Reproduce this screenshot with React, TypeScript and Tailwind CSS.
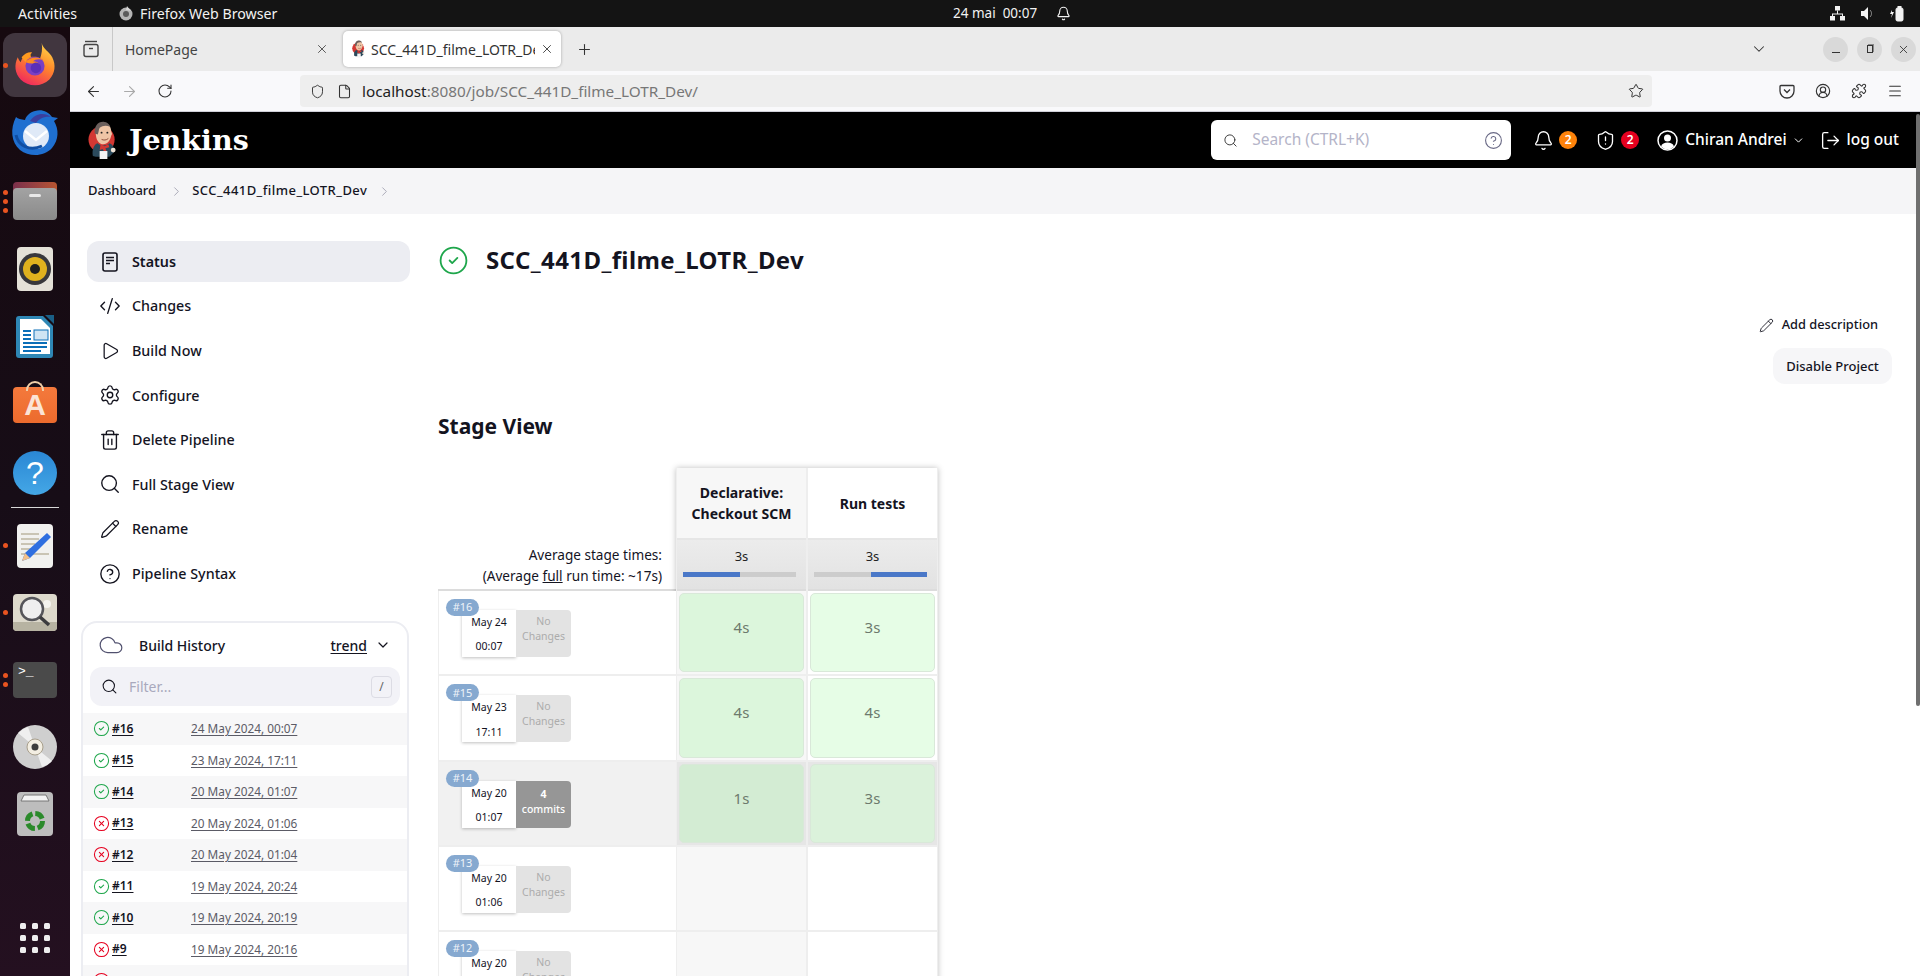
import {
  ArrowLeft,
  ArrowRight,
  Bell,
  ChevronDown,
  ChevronRight,
  CircleCheck,
  CircleHelp,
  CircleUserRound,
  CircleX,
  Cloud,
  CodeXml,
  File,
  LogOut,
  Menu,
  Pencil,
  Play,
  Plus,
  Puzzle,
  RotateCw,
  Search,
  Settings,
  Shield,
  ShieldAlert,
  Star,
  Trash2,
  X,
} from "lucide-react";
import type { ReactNode } from "react";

const navItems = [
  { label: "Status", icon: <StatusIcon />, active: true },
  { label: "Changes", icon: <CodeXml size={22} strokeWidth={1.5} /> },
  { label: "Build Now", icon: <Play size={20} strokeWidth={1.5} /> },
  { label: "Configure", icon: <Settings size={22} strokeWidth={1.5} /> },
  { label: "Delete Pipeline", icon: <Trash2 size={22} strokeWidth={1.5} /> },
  { label: "Full Stage View", icon: <Search size={22} strokeWidth={1.5} /> },
  { label: "Rename", icon: <Pencil size={20} strokeWidth={1.5} /> },
  { label: "Pipeline Syntax", icon: <CircleHelp size={22} strokeWidth={1.5} /> },
];

const builds = [
  { id: "#16", date: "24 May 2024, 00:07", ok: true },
  { id: "#15", date: "23 May 2024, 17:11", ok: true },
  { id: "#14", date: "20 May 2024, 01:07", ok: true },
  { id: "#13", date: "20 May 2024, 01:06", ok: false },
  { id: "#12", date: "20 May 2024, 01:04", ok: false },
  { id: "#11", date: "19 May 2024, 20:24", ok: true },
  { id: "#10", date: "19 May 2024, 20:19", ok: true },
  { id: "#9", date: "19 May 2024, 20:16", ok: false },
  { id: "#8", date: "19 May 2024, 20:10", ok: false },
];

const stageRows = [
  { id: "#16", day: "May 24", time: "00:07", commits: 0, a: "4s", b: "3s" },
  { id: "#15", day: "May 23", time: "17:11", commits: 0, a: "4s", b: "4s" },
  { id: "#14", day: "May 20", time: "01:07", commits: 4, a: "1s", b: "3s", hover: true },
  { id: "#13", day: "May 20", time: "01:06", commits: 0 },
  { id: "#12", day: "May 20", time: "01:04", commits: 0 },
];

function StatusIcon() {
  return (
    <svg width="22" height="22" viewBox="0 0 22 22" fill="none" stroke="currentColor" strokeWidth="1.6">
      <rect x="4" y="2" width="14" height="18" rx="2" />
      <path d="M7 6.500h8M7 9.500h8M7 12.500h4" />
    </svg>
  );
}

function UserIcon() {
  return (
    <svg width="21" height="21" viewBox="0 0 21 21">
      <circle cx="10.500" cy="10.500" r="9.500" fill="none" stroke="#fff" strokeWidth="1.500" />
      <circle cx="10.500" cy="8" r="3.500" fill="#fff" />
      <path d="M4 16.500c1-3 3.500-4 6.500-4s5.500 1 6.500 4a9 9 0 0 1-13 0z" fill="#fff" />
    </svg>
  );
}

function FirefoxLogo({ size = 46 }: { size?: number }) {
  return (
    <svg width={size} height={size} viewBox="0 0 48 48">
      <defs>
        <linearGradient id="ffA" x1="0.8" y1="0" x2="0.3" y2="1">
          <stop offset="0" stopColor="#ffd84a" />
          <stop offset="0.45" stopColor="#ff8a2a" />
          <stop offset="1" stopColor="#f0285e" />
        </linearGradient>
      </defs>
      <path d="M31 1c1 6 8 9 11 15 4 8 3 17-3 23-8 8-22 8-30 0C3 33 2 24 6 16c1 3 2 4 3 5 1-4 4-7 8-9-1 2-1 3 0 4 4-1 8-1 12 2 2-5 3-11 2-17z" fill="url(#ffA)" />
      <path d="M10 16c3-4 8-6 11-5-2 2-2 3-1 4-3 1-5 3-6 6-1-2-3-3-4-5z" fill="#ff9a1f" />
      <circle cx="24" cy="25" r="10" fill="#7a3fc4" />
      <path d="M14 21c4-5 13-7 19-2-5-2-9-1-11 1 3 0 5 1 6 3-5-1-9 0-14-2z" fill="#ff8a1f" />
      <circle cx="25" cy="27" r="5.500" fill="#5b2fb8" />
    </svg>
  );
}

function DockIcon({ name }: { name: string }) {
  if (name === "firefox") return <FirefoxLogo />;
  if (name === "thunderbird")
    return (
      <svg width="50" height="48" viewBox="0 0 50 48">
        <path d="M6 8c-6 12-5 25 4 33 9 7 24 7 32-2 7-8 7-19 2-27l4-3-6-1c-4-6-11-8-17-6-5 1-9 5-10 9-4-1-7-1-9-3z" fill="#1f6fd0" />
        <path d="M20 12c5-8 15-9 21-4-7-1-12 2-15 6z" fill="#3b3f9e" />
        <circle cx="26" cy="27" r="13" fill="#dfe9f7" />
        <path d="M15 22l11 9 11-9" fill="none" stroke="#fff" strokeWidth="2.500" />
        <path d="M6 26c2 10 13 17 26 11" fill="none" stroke="#0f4ea3" strokeWidth="3" />
      </svg>
    );
  if (name === "files")
    return (
      <div className="relative h-[38px] w-[44px]">
        <div className="absolute left-0 top-0 h-[20px] w-full rounded-t-[4px] bg-gradient-to-r from-[#7a2f4a] to-[#b8552f]" />
        <div className="absolute bottom-0 left-0 flex h-[32px] w-full justify-center rounded-[4px] bg-gradient-to-b from-[#a3a3a3] to-[#8a8a8a] pt-[6px]">
          <div className="h-[3px] w-[12px] rounded-sm bg-[#e8e8e8]" />
        </div>
      </div>
    );
  if (name === "rhythmbox")
    return (
      <div className="flex h-[44px] w-[36px] items-center justify-center rounded-[4px] bg-[#e4e1d8]">
        <div className="flex h-[32px] w-[32px] items-center justify-center rounded-full bg-[#38383c]">
          <div className="flex h-[24px] w-[24px] items-center justify-center rounded-full bg-[#dfb11e]">
            <div className="h-[10px] w-[10px] rounded-full bg-[#1e1e1e]" />
          </div>
        </div>
      </div>
    );
  if (name === "writer")
    return (
      <svg width="38" height="44" viewBox="0 0 38 44">
        <path d="M3 1h24l10 10v29a3 3 0 0 1-3 3H3a3 3 0 0 1-3-3V4a3 3 0 0 1 3-3z" fill="#2e87b5" />
        <path d="M4 4h21l9 9v26H4z" fill="#fff" />
        <path d="M29 0h9v9z" fill="#1a5f86" />
        <path d="M7 16h8M7 20h8M7 24h8M7 28h24M7 32h24M7 36h18" stroke="#0b6fb8" strokeWidth="2" />
        <rect x="18" y="15" width="14" height="10" fill="#cfe4f3" stroke="#0b6fb8" />
      </svg>
    );
  if (name === "software")
    return (
      <div className="relative flex h-[36px] w-[44px] items-center justify-center rounded-[4px] bg-gradient-to-b from-[#f4793c] to-[#ec6b2d]">
        <div className="absolute left-[13px] top-[-6px] h-[10px] w-[18px] rounded-t-full border-2 border-b-0 border-[#f0cfa8]" />
        <span className="font-['Liberation_Sans',sans-serif] text-[30px] font-bold leading-none text-[#fbe4d6]">A</span>
      </div>
    );
  if (name === "help")
    return (
      <div className="flex h-[44px] w-[44px] items-center justify-center rounded-full bg-gradient-to-b from-[#2a87d4] to-[#44a7e6]">
        <span className="font-['Liberation_Sans',sans-serif] text-[32px] leading-none text-white">?</span>
      </div>
    );
  if (name === "editor")
    return (
      <svg width="36" height="44" viewBox="0 0 36 44">
        <rect width="36" height="44" rx="4" fill="#f1f1ef" />
        <path d="M4 10h18M4 15h18M4 20h14M4 25h12M4 30h28" stroke="#c9c4b4" strokeWidth="2" />
        <path d="M30 9l4 4-21 21-8 3 3-8z" fill="#2f6fe0" />
        <path d="M8 29l5 5-8 3z" fill="#f3c089" />
      </svg>
    );
  if (name === "viewer")
    return (
      <svg width="44" height="37" viewBox="0 0 44 37">
        <rect width="44" height="37" rx="4" fill="#ddd9cc" />
        <path d="M0 28h44v5a4 4 0 0 1-4 4H4a4 4 0 0 1-4-4z" fill="#b7b3a2" />
        <circle cx="34" cy="10" r="4" fill="#f4f3ee" />
        <circle cx="19" cy="15" r="11" fill="#efefef" stroke="#55555a" strokeWidth="2.500" />
        <path d="M27 23l9 8" stroke="#3c3c3f" strokeWidth="3.500" />
      </svg>
    );
  if (name === "terminal")
    return (
      <div className="h-[36px] w-[44px] rounded-[4px] bg-[#4a4a4a] pl-[5px] pt-[2px] font-['Liberation_Mono',monospace] text-[13px] leading-[16px] text-white">
        &gt;_
      </div>
    );
  if (name === "disc")
    return (
      <svg width="44" height="44" viewBox="0 0 44 44">
        <circle cx="22" cy="22" r="22" fill="#cfcfcf" />
        <path d="M22 22L5 8a22 22 0 0 1 10-6zM22 22l17 14a22 22 0 0 1-10 6z" fill="#efefef" />
        <circle cx="22" cy="22" r="8" fill="#f3eee2" stroke="#a89f8c" />
        <circle cx="22" cy="22" r="3.500" fill="#3d3d3d" />
      </svg>
    );
  return (
    <svg width="36" height="44" viewBox="0 0 36 44">
      <rect width="36" height="44" rx="4" fill="#bdbdbd" />
      <path d="M4 9l3-6h22l3 6z" fill="#f3f3f3" stroke="#777" />
      <circle cx="18" cy="29" r="7.500" fill="none" stroke="#2b8a2b" strokeWidth="5" strokeDasharray="9 2.800" />
    </svg>
  );
}

function Dock() {
  const upper = [
    { name: "firefox", dots: 1, tile: true },
    { name: "thunderbird", dots: 0 },
    { name: "files", dots: 3 },
    { name: "rhythmbox", dots: 0 },
    { name: "writer", dots: 0 },
    { name: "software", dots: 0 },
    { name: "help", dots: 0 },
  ];
  const lower = [
    { name: "editor", dots: 1 },
    { name: "viewer", dots: 1 },
    { name: "terminal", dots: 2 },
    { name: "disc", dots: 0 },
    { name: "trash", dots: 0 },
  ];
  const slot = (item: { name: string; dots: number; tile?: boolean }, h: string) => (
    <div key={item.name} className={`relative flex w-[70px] items-center justify-center ${h}`}>
      {item.tile && <div className="absolute left-[3px] top-[2px] h-[64px] w-[64px] rounded-xl bg-[#41363f]" />}
      <div className="relative">
        <DockIcon name={item.name} />
      </div>
      {item.dots > 0 && (
        <div className="absolute left-[3px] top-0 flex h-full flex-col justify-center gap-[4px]">
          {Array.from({ length: item.dots }).map((_, i) => (
            <div key={i} className="h-[5px] w-[5px] rounded-full bg-[#e95420]" />
          ))}
        </div>
      )}
    </div>
  );
  return (
    <aside className="flex w-[70px] shrink-0 flex-col bg-gradient-to-b from-[#16090f] via-[#170d17] to-[#241020] pt-[4px]">
      {upper.map((item) => slot(item, "h-[68px]"))}
      <div className="mx-auto h-px w-[48px] bg-[#d8d8d8]" />
      <div className="mt-[4px]">{lower.map((item) => slot(item, "h-[67px]"))}</div>
      <div className="mt-auto mb-[23px] grid w-fit grid-cols-3 gap-[6px] self-center">
        {Array.from({ length: 9 }).map((_, i) => (
          <div key={i} className="h-[6px] w-[6px] rounded-[1.5px] bg-[#eeeeee]" />
        ))}
      </div>
    </aside>
  );
}

function TopBar() {
  return (
    <header className="relative flex h-[27px] shrink-0 items-center bg-[#141414] text-[14.2px] text-[#f2f2f2]">
      <span className="ml-[18px]">Activities</span>
      <div className="ml-[41px] flex items-center gap-[6px]">
        <svg width="16" height="16" viewBox="0 0 16 16">
          <circle cx="8" cy="9" r="6.500" fill="#b5b5b5" />
          <path d="M9 1c1 2 3 3 4 5L8 5z" fill="#d5d5d5" />
          <circle cx="8" cy="9" r="3" fill="#5a5a5a" />
        </svg>
        <span>Firefox Web Browser</span>
      </div>
      <div className="absolute left-[953px] flex items-center gap-[19px]">
        <span className="text-[13.5px]">24 mai&nbsp; 00:07</span>
        <Bell size={15} strokeWidth={1.8} />
      </div>
      <div className="ml-auto mr-[15px] flex items-center gap-[15px]">
        <svg width="15" height="15" viewBox="0 0 15 15" fill="#f2f2f2">
          <rect x="5" y="0" width="5" height="4.500" />
          <rect x="0" y="10" width="5" height="4.500" />
          <rect x="10" y="10" width="5" height="4.500" />
          <path d="M7 4.500h1v3h5v3h-1V8.500H3v2H2v-3h5z" />
        </svg>
        <svg width="14" height="15" viewBox="0 0 14 15" fill="#f2f2f2">
          <path d="M1 5h3l4-4v13l-4-4H1z" />
          <path d="M10 4c2 2 2 5 0 7" fill="none" stroke="#999" />
        </svg>
        <svg width="16" height="16" viewBox="0 0 16 16" fill="none" stroke="#f2f2f2">
          <path d="M3 4L1 8h2l-1 4 3-6H3z" fill="#f2f2f2" stroke="none" />
          <rect x="7" y="2" width="7" height="13" rx="1.500" fill="#f2f2f2" />
          <rect x="9" y="0.500" width="3" height="1.500" fill="#f2f2f2" />
        </svg>
      </div>
    </header>
  );
}

function ButlerLogo({ width }: { width: number }) {
  return (
    <svg width={width} height={(width * 40) / 32} viewBox="0 0 32 40" className="shrink-0">
      <circle cx="14" cy="19" r="13.500" fill="#d33833" />
      <path d="M5 36c-1-6 1-12 5-13 3 3 9 3 12 0 4 1 5 5 5 9l-5 5H8z" fill="#2b4a5c" />
      <path d="M13 24l4 2 4-2 1 3-4 1 1 3-2 1-2-3-3 1z" fill="#d33833" />
      <path d="M8 12c0-6 3-10 8-10s8 4 8 9c1 1 1 3 0 4-1 5-4 9-8 9-5 0-8-5-8-12z" fill="#efc5a6" />
      <path d="M7 13c-1-8 4-13 10-12 2 0 5 2 6 5-5-2-8-1-11 1-1 2-1 5-2 7z" fill="#6b5f5c" />
      <circle cx="14" cy="12" r="1" fill="#222" />
      <circle cx="20" cy="12" r="1" fill="#222" />
      <path d="M14 19c2 1 5 1 7-1" stroke="#8d4e3c" fill="none" />
      <path d="M12 31h8v9h-8z" fill="#f3f3f3" />
      <circle cx="26" cy="30" r="2.500" fill="#efe3d6" />
    </svg>
  );
}

function BrowserChrome() {
  return (
    <>
      <div className="flex h-[44px] shrink-0 items-center bg-[#ebebeb] text-[14px] text-[#333]">
        <div className="flex h-full w-[43px] items-center justify-center border-r border-[#c8c8c8]">
          <svg width="18" height="18" viewBox="0 0 18 18" fill="none" stroke="#444" strokeWidth="1.400">
            <path d="M3 1.500h12" />
            <rect x="2" y="4.500" width="14" height="12" rx="2" />
            <path d="M7 8.500h4" />
          </svg>
        </div>
        <div className="flex h-full w-[230px] items-center pl-[12px] pr-[14px] text-[#444]">
          <span>HomePage</span>
          <X size={14} strokeWidth={1.5} className="ml-auto" />
        </div>
        <div className="flex h-[36px] w-[218px] items-center gap-[5px] rounded-[5px] bg-white pl-[9px] pr-[7px] shadow-[0_0_3px_rgba(0,0,0,0.3)]">
          <ButlerLogo width={14} />
          <span className="min-w-0 flex-1 overflow-hidden whitespace-nowrap">SCC_441D_filme_LOTR_Dev</span>
          <X size={14} strokeWidth={1.5} />
        </div>
        <Plus size={17} strokeWidth={1.5} className="ml-[15px]" />
        <ChevronDown size={18} strokeWidth={1.4} className="ml-auto mr-[55px]" />
        <div className="mr-[4px] flex items-center gap-[9px]">
          <div className="flex h-[25px] w-[25px] items-center justify-center rounded-full bg-[#d9d9d9]">
            <div className="mt-[6px] h-px w-[8px] bg-[#333]" />
          </div>
          <div className="flex h-[25px] w-[25px] items-center justify-center rounded-full bg-[#d9d9d9]">
            <div className="h-[8px] w-[6px] border border-[#333] shadow-[1px_-1px_0_#888]" />
          </div>
          <div className="flex h-[25px] w-[25px] items-center justify-center rounded-full bg-[#d9d9d9]">
            <X size={13} strokeWidth={1.6} />
          </div>
        </div>
      </div>
      <div className="flex h-[41px] shrink-0 items-center border-b border-[#cfcfd8] bg-[#f9f9fb] text-[#333]">
        <ArrowLeft size={17} strokeWidth={1.5} className="ml-[15px]" />
        <ArrowRight size={17} strokeWidth={1.5} className="ml-[19px] text-[#aaa]" />
        <RotateCw size={16} strokeWidth={1.6} className="ml-[19px]" />
        <div className="ml-[127px] flex h-[32px] w-[1352px] items-center rounded-[4px] bg-[#eeeeee] pl-[10px] pr-[8px]">
          <Shield size={15} strokeWidth={1.5} />
          <File size={15} strokeWidth={1.7} className="ml-[12px]" />
          <span className="ml-[10px] text-[15.3px] text-[#222]">
            localhost<span className="text-[#777]">:8080/job/SCC_441D_filme_LOTR_Dev/</span>
          </span>
          <Star size={16} strokeWidth={1.5} className="ml-auto" />
        </div>
        <div className="ml-auto mr-[17px] flex items-center gap-[20px]">
          <svg width="16" height="16" viewBox="0 0 16 16" fill="none" stroke="#333" strokeWidth="1.300">
            <path d="M2 2.500h12a1 1 0 0 1 1 1V8a7 7 0 0 1-14 0V3.500a1 1 0 0 1 1-1z" />
            <path d="M5 6.500l3 3 3-3" />
          </svg>
          <CircleUserRound size={16} strokeWidth={1.7} />
          <Puzzle size={16} strokeWidth={1.6} />
          <Menu size={16} strokeWidth={1.6} />
        </div>
      </div>
    </>
  );
}

function JenkinsHeader() {
  return (
    <div className="flex h-[56px] shrink-0 items-center bg-black text-white">
      <div className="ml-[18px]">
        <ButlerLogo width={31} />
      </div>
      <span className="ml-[10px] font-['DejaVu_Serif',serif] text-[28.5px] font-bold leading-none">Jenkins</span>
      <div className="ml-auto flex h-[40px] w-[300px] items-center rounded-[6px] bg-white pl-[12px] pr-[8px]">
        <Search size={15} strokeWidth={1.5} className="text-[#333]" />
        <span className="ml-[14px] text-[15.5px] text-[#b4b4c8]">Search (CTRL+K)</span>
        <CircleHelp size={19} strokeWidth={1.4} className="ml-auto text-[#6a6a86]" />
      </div>
      <div className="ml-[22px] flex items-center">
        <Bell size={21} strokeWidth={1.5} />
        <div className="ml-[5px] flex h-[18px] w-[18px] items-center justify-center rounded-full bg-[#fe820a] text-[12px] font-semibold">2</div>
        <ShieldAlert size={21} strokeWidth={1.5} className="ml-[18px]" />
        <div className="ml-[5px] flex h-[18px] w-[18px] items-center justify-center rounded-full bg-[#e6001f] text-[12px] font-semibold">2</div>
        <div className="ml-[18px]">
          <UserIcon />
        </div>
        <span className="ml-[7px] text-[15.5px] font-medium">Chiran Andrei</span>
        <ChevronDown size={13} strokeWidth={1.8} className="ml-[5px]" />
        <LogOut size={21} strokeWidth={1.5} className="ml-[15px]" />
        <span className="ml-[6px] mr-[21px] text-[15.5px] font-medium">log out</span>
      </div>
    </div>
  );
}

function Breadcrumb() {
  return (
    <div className="flex h-[46px] shrink-0 items-center bg-[#f5f5f7] text-[13px] font-medium text-[#14141f]">
      <span className="ml-[18px]">Dashboard</span>
      <ChevronRight size={15} strokeWidth={1.3} className="ml-[13px] text-[#9a9aaa]" />
      <span className="ml-[8px] tracking-[0.45px]">SCC_441D_filme_LOTR_Dev</span>
      <ChevronRight size={15} strokeWidth={1.3} className="ml-[10px] text-[#9a9aaa]" />
    </div>
  );
}

function Sidebar() {
  return (
    <div className="w-[368px] shrink-0 pl-[11px] pt-[27px] text-[#14141f]">
      <nav className="ml-[6px] flex w-[323px] flex-col gap-[3.6px]">
        {navItems.map((item) => (
          <div
            key={item.label}
            className={`flex h-[41px] items-center rounded-xl text-[14.3px] font-medium ${item.active ? "bg-[#ecedf2] font-semibold" : ""}`}
          >
            <div className="flex w-[45px] justify-center">{item.icon}</div>
            <span>{item.label}</span>
          </div>
        ))}
      </nav>
      <section className="mt-[27px] w-[328px] rounded-t-2xl border-2 border-[#ecedf2] pb-10">
        <div className="flex h-[44px] items-center pl-[15px] pr-[16px] text-[14px] font-medium">
          <Cloud size={26} strokeWidth={1.1} className="text-[#50506e]" />
          <span className="ml-[15px]">Build History</span>
          <span className="ml-auto underline underline-offset-2">trend</span>
          <ChevronDown size={16} strokeWidth={1.8} className="ml-[8px]" />
        </div>
        <div className="mx-[7px] flex h-[39px] items-center rounded-xl bg-[#f2f2f7] pl-[11px] pr-[8px]">
          <Search size={17} strokeWidth={1.5} />
          <span className="ml-[11px] text-[14px] text-[#a9a9bd]">Filter...</span>
          <div className="ml-auto flex h-[22px] w-[21px] items-center justify-center rounded-[4px] border border-[#dcdce4] text-[12px] text-[#666]">/</div>
        </div>
        <div className="mt-[7px]">
          {builds.map((b, i) => (
            <div key={b.id} className={`flex h-[31.5px] items-center pl-[10px] ${i % 2 === 0 ? "bg-[#f7f7f8]" : "bg-white"}`}>
              {b.ok ? (
                <CircleCheck size={17} strokeWidth={1.5} className="text-[#1ea64b]" />
              ) : (
                <CircleX size={17} strokeWidth={1.5} className="text-[#e6001f]" />
              )}
              <span className="ml-[2px] w-[79px] text-[12px] font-semibold underline underline-offset-2">{b.id}</span>
              <span className="text-[11.8px] text-[#5b5b66] underline underline-offset-2">{b.date}</span>
            </div>
          ))}
        </div>
      </section>
    </div>
  );
}

function StageCard({ row }: { row: (typeof stageRows)[number] }) {
  const hasCommits = row.commits > 0;
  return (
    <div className={`relative h-[85.3px] border-b-2 border-l border-[#eeeeee] ${row.hover ? "bg-[#f1f1f1]" : "bg-white"}`}>
      <div className="absolute left-[7px] top-[8px] z-10 flex h-[17px] w-[33px] items-center justify-center rounded-full bg-[#86a9d0] text-[11px] text-[#eef3f9]">
        {row.id}
      </div>
      <div className="absolute left-[23px] top-[19px] flex h-[47px] rounded-r-[4px]">
        <div className="flex w-[54px] flex-col items-center justify-between bg-white pb-[2px] pt-[5px] text-[10.5px] text-[#14141f] shadow-[0_1px_3px_rgba(0,0,0,0.25)]">
          <span>{row.day}</span>
          <span>{row.time}</span>
        </div>
        <div
          className={`flex w-[55px] flex-col items-center rounded-r-[4px] text-center text-[10.5px] leading-[15px] ${
            hasCommits ? "bg-[#969696] pt-[6px] font-medium text-white" : "bg-[#e3e3e3] pt-[4px] text-[#acacac]"
          }`}
        >
          {hasCommits ? (
            <>
              <span className="font-bold">{row.commits}</span>
              <span>commits</span>
            </>
          ) : (
            <>
              <span>No</span>
              <span>Changes</span>
            </>
          )}
        </div>
      </div>
    </div>
  );
}

function StageCol({ title, bar, dark, right, cells }: { title: ReactNode; bar: string; dark: boolean; right?: boolean; cells: (string | undefined)[] }) {
  return (
    <div className={`w-[131px] border-x border-[#eeeeee] ${dark ? "bg-[#f7f7f7]" : "bg-white"}`}>
      <div className="flex h-[72px] items-center justify-center border-b-2 border-[#e6e6e6] text-center text-[14px] font-bold leading-[21px] text-[#14141f]">
        {title}
      </div>
      <div className="h-[51px] border-b-2 border-[#dcdcdc] bg-gradient-to-b from-[#ececec] to-[#e2e2e2] pt-[7px] text-center text-[13px] text-[#222]">
        {bar}
        <div className={`ml-[6px] mr-[10px] mt-[5px] flex h-[5px] bg-[#cccccc] ${right ? "justify-end" : ""}`}>
          <div className="h-full w-1/2 bg-[#4a78c8]" />
        </div>
      </div>
      {cells.map((text, i) => {
        const bg = i === 2 ? (dark ? "bg-[#d3ecd3]" : "bg-[#dbf2db]") : dark ? "bg-[#dcf6dc]" : "bg-[#e6fde6]";
        return (
          <div key={i} className={`h-[85.3px] border-b-2 border-[#eeeeee] p-[2px] ${i === 2 ? "bg-[#e6e6e6]" : ""}`}>
            {text && (
              <div className={`flex h-full justify-center rounded-[5px] border border-[#d9e8d9] pt-[22px] text-[15px] text-[#6d7a6d] ${bg}`}>
                {text}
              </div>
            )}
          </div>
        );
      })}
    </div>
  );
}

function StageView() {
  return (
    <div className="mt-[28px] flex">
      <div className="w-[238px] shrink-0">
        <div className="h-[72px]" />
        <div className="h-[51px] border-b-2 border-[#dcdcdc] pr-[14px] pt-[4px] text-right text-[13.6px] leading-[21px] text-[#14141f]">
          <div>Average stage times:</div>
          <div>
            (Average <span className="underline">full</span> run time: ~17s)
          </div>
        </div>
        {stageRows.map((row) => (
          <StageCard key={row.id} row={row} />
        ))}
      </div>
      <div className="flex shadow-[0_0_6px_rgba(0,0,0,0.25)]">
        <StageCol
          title={
            <span>
              Declarative:
              <br />
              Checkout SCM
            </span>
          }
          bar="3s"
          dark
          cells={stageRows.map((r) => r.a)}
        />
        <StageCol title="Run tests" bar="3s" dark={false} right cells={stageRows.map((r) => r.b)} />
      </div>
    </div>
  );
}

export default function App() {
  return (
    <div className="flex h-[976px] w-[1920px] flex-col overflow-hidden bg-white font-['Noto_Sans',sans-serif]">
      <TopBar />
      <div className="flex min-h-0 flex-1">
        <Dock />
        <div className="flex min-w-0 flex-1 flex-col">
          <BrowserChrome />
          <div className="relative flex min-h-0 flex-1 flex-col overflow-hidden">
            <div className="absolute right-0 top-[2px] z-20 h-[592px] w-[4px] rounded-full bg-[#6f6f6f]" />
            <JenkinsHeader />
            <Breadcrumb />
            <div className="flex min-h-0 flex-1">
              <Sidebar />
              <main className="min-w-0 flex-1 pr-[28px] pt-[26px]">
                <div className="flex h-[40px] items-center">
                  <CircleCheck size={31} strokeWidth={1.4} className="text-[#1ea64b]" />
                  <h1 className="ml-[17px] text-[24px] font-bold tracking-[0.4px] text-[#14141f]">SCC_441D_filme_LOTR_Dev</h1>
                </div>
                <div className="mt-[34px] mr-[14px] flex h-[22px] items-center justify-end text-[12.8px] font-medium text-[#14141f]">
                  <Pencil size={15} strokeWidth={1.4} className="mr-[8px]" />
                  Add description
                </div>
                <div className="mt-[12px] flex justify-end">
                  <div className="flex h-[36px] w-[119px] items-center justify-center rounded-xl bg-[#f6f6f8] pt-[1px] text-[13px] font-medium text-[#14141f]">
                    Disable Project
                  </div>
                </div>
                <h2 className="mt-[28px] h-[28px] text-[21px] font-bold leading-[28px] text-[#14141f]">Stage View</h2>
                <StageView />
              </main>
            </div>
          </div>
        </div>
      </div>
    </div>
  );
}
